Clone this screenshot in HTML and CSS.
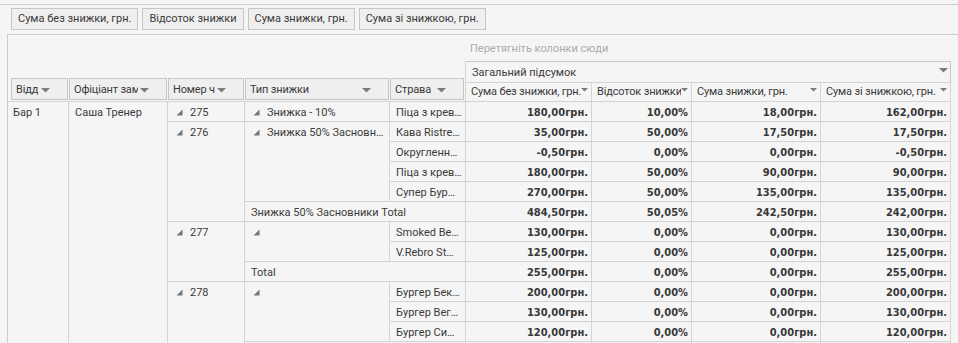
FILE: index.html
```html
<!DOCTYPE html>
<html lang="uk">
<head>
  <meta charset="UTF-8" />
  <meta name="viewport" content="width=device-width, initial-scale=1.0" />
  <title>Знижки по чеках</title>
  <link rel="stylesheet" href="styles.css">
</head>
<body>
  <!-- Поля даних зведеної таблиці -->
  <div class="data-fields">
    <span class="field-btn">Сума без знижки, грн.</span>
    <span class="field-btn">Відсоток знижки</span>
    <span class="field-btn">Сума знижки, грн.</span>
    <span class="field-btn">Сума зі знижкою, грн.</span>
  </div>

  <div class="pivot">
    <table class="grid">
      <colgroup>
        <col class="c-dept">
        <col class="c-waiter">
        <col class="c-check">
        <col class="c-type">
        <col class="c-dish">
        <col class="c-sum">
        <col class="c-pct">
        <col class="c-disc">
        <col class="c-total">
      </colgroup>

      <tr class="drop-row">
        <td colspan="5"></td>
        <td colspan="4" class="drop-hint">Перетягніть колонки сюди</td>
      </tr>

      <tr class="head-row">
        <td rowspan="2" class="rf rf-first">
          <div class="fbox"><span class="ft">Відд</span><svg class="drop" viewBox="0 0 9 5"><path d="M0 0h9L4.5 4.5z"/></svg></div>
        </td>
        <td rowspan="2" class="rf">
          <div class="fbox"><span class="ft">Офіціант замовлення</span><svg class="drop" viewBox="0 0 9 5"><path d="M0 0h9L4.5 4.5z"/></svg></div>
        </td>
        <td rowspan="2" class="rf">
          <div class="fbox"><span class="ft">Номер ч</span><svg class="drop" viewBox="0 0 9 5"><path d="M0 0h9L4.5 4.5z"/></svg></div>
        </td>
        <td rowspan="2" class="rf">
          <div class="fbox"><span class="ft">Тип знижки</span><svg class="drop" viewBox="0 0 9 5"><path d="M0 0h9L4.5 4.5z"/></svg></div>
        </td>
        <td rowspan="2" class="rf rf-last">
          <div class="fbox"><span class="ft">Страва</span><svg class="drop" viewBox="0 0 9 5"><path d="M0 0h9L4.5 4.5z"/></svg></div>
        </td>
        <td colspan="4" class="grand-head">
          <div class="in"><span class="ft">Загальний підсумок</span><svg class="drop" viewBox="0 0 9 5"><path d="M0 0h9L4.5 4.5z"/></svg></div>
        </td>
      </tr>

      <tr class="dh-row">
        <td class="dh"><div class="in"><span class="ft">Сума без знижки, грн.</span><svg class="drop-sm" viewBox="0 0 7 4"><path d="M0 0h7L3.5 3.5z"/></svg></div></td>
        <td class="dh"><div class="in"><span class="ft">Відсоток знижки</span><svg class="drop-sm" viewBox="0 0 7 4"><path d="M0 0h7L3.5 3.5z"/></svg></div></td>
        <td class="dh"><div class="in"><span class="ft">Сума знижки, грн.</span><svg class="drop-sm" viewBox="0 0 7 4"><path d="M0 0h7L3.5 3.5z"/></svg></div></td>
        <td class="dh"><div class="in"><span class="ft">Сума зі знижкою, грн.</span><svg class="drop-sm" viewBox="0 0 7 4"><path d="M0 0h7L3.5 3.5z"/></svg></div></td>
      </tr>

      <!-- чек 275 -->
      <tr class="r">
        <td rowspan="13" class="rh rh-dept">Бар 1</td>
        <td rowspan="13" class="rh">Саша Тренер</td>
        <td class="rh grp"><svg class="exp" viewBox="0 0 7 7"><path d="M6.5 0.5v6h-6z"/></svg>275</td>
        <td class="rh grp"><svg class="exp" viewBox="0 0 7 7"><path d="M6.5 0.5v6h-6z"/></svg>Знижка - 10%</td>
        <td class="rh">Піца з крев…</td>
        <td class="num">180,00грн.</td>
        <td class="num">10,00%</td>
        <td class="num">18,00грн.</td>
        <td class="num">162,00грн.</td>
      </tr>

      <!-- чек 276 -->
      <tr class="r">
        <td rowspan="5" class="rh grp"><svg class="exp" viewBox="0 0 7 7"><path d="M6.5 0.5v6h-6z"/></svg>276</td>
        <td rowspan="4" class="rh grp"><svg class="exp" viewBox="0 0 7 7"><path d="M6.5 0.5v6h-6z"/></svg>Знижка 50% Засновн…</td>
        <td class="rh">Кава Ristre…</td>
        <td class="num">35,00грн.</td>
        <td class="num">50,00%</td>
        <td class="num">17,50грн.</td>
        <td class="num">17,50грн.</td>
      </tr>
      <tr class="r">
        <td class="rh">Округленн…</td>
        <td class="num">-0,50грн.</td>
        <td class="num">0,00%</td>
        <td class="num">0,00грн.</td>
        <td class="num">-0,50грн.</td>
      </tr>
      <tr class="r">
        <td class="rh">Піца з крев…</td>
        <td class="num">180,00грн.</td>
        <td class="num">50,00%</td>
        <td class="num">90,00грн.</td>
        <td class="num">90,00грн.</td>
      </tr>
      <tr class="r">
        <td class="rh">Супер Бур…</td>
        <td class="num">270,00грн.</td>
        <td class="num">50,00%</td>
        <td class="num">135,00грн.</td>
        <td class="num">135,00грн.</td>
      </tr>
      <tr class="r">
        <td colspan="2" class="rh rh-total">Знижка 50% Засновники Total</td>
        <td class="num">484,50грн.</td>
        <td class="num">50,05%</td>
        <td class="num">242,50грн.</td>
        <td class="num">242,00грн.</td>
      </tr>

      <!-- чек 277 -->
      <tr class="r">
        <td rowspan="3" class="rh grp"><svg class="exp" viewBox="0 0 7 7"><path d="M6.5 0.5v6h-6z"/></svg>277</td>
        <td rowspan="2" class="rh grp"><svg class="exp" viewBox="0 0 7 7"><path d="M6.5 0.5v6h-6z"/></svg></td>
        <td class="rh">Smoked Be…</td>
        <td class="num">130,00грн.</td>
        <td class="num">0,00%</td>
        <td class="num">0,00грн.</td>
        <td class="num">130,00грн.</td>
      </tr>
      <tr class="r">
        <td class="rh">V.Rebro St…</td>
        <td class="num">125,00грн.</td>
        <td class="num">0,00%</td>
        <td class="num">0,00грн.</td>
        <td class="num">125,00грн.</td>
      </tr>
      <tr class="r">
        <td colspan="2" class="rh rh-total">Total</td>
        <td class="num">255,00грн.</td>
        <td class="num">0,00%</td>
        <td class="num">0,00грн.</td>
        <td class="num">255,00грн.</td>
      </tr>

      <!-- чек 278 -->
      <tr class="r">
        <td rowspan="4" class="rh grp"><svg class="exp" viewBox="0 0 7 7"><path d="M6.5 0.5v6h-6z"/></svg>278</td>
        <td rowspan="3" class="rh grp"><svg class="exp" viewBox="0 0 7 7"><path d="M6.5 0.5v6h-6z"/></svg></td>
        <td class="rh">Бургер Бек…</td>
        <td class="num">200,00грн.</td>
        <td class="num">0,00%</td>
        <td class="num">0,00грн.</td>
        <td class="num">200,00грн.</td>
      </tr>
      <tr class="r">
        <td class="rh">Бургер Вег…</td>
        <td class="num">130,00грн.</td>
        <td class="num">0,00%</td>
        <td class="num">0,00грн.</td>
        <td class="num">130,00грн.</td>
      </tr>
      <tr class="r">
        <td class="rh">Бургер Си…</td>
        <td class="num">120,00грн.</td>
        <td class="num">0,00%</td>
        <td class="num">0,00грн.</td>
        <td class="num">120,00грн.</td>
      </tr>
      <tr class="r">
        <td colspan="2" class="rh rh-total">Total</td>
        <td class="num">450,00грн.</td>
        <td class="num">0,00%</td>
        <td class="num">0,00грн.</td>
        <td class="num">450,00грн.</td>
      </tr>
    </table>
  </div>
</body>
</html>
```

FILE: styles.css
```css
body {
  margin: 0;
  background-color: #f5f5f5;
  font-family: Roboto, "Liberation Sans", Arial, sans-serif;
  font-size: 11px;
  color: #3a3a3a;
  overflow: hidden;
}

/* кнопки полів даних */
.data-fields {
  display: flex;
  gap: 4px;
  margin-top: 4px;
  padding: 3px 11px 4px;
  border-top: 1px solid #cdcdcd;
}
.field-btn {
  height: 22px;
  box-sizing: border-box;
  padding: 0 6px;
  line-height: 20px;
  border: 1px solid #c6c6c6;
  background-color: #efefef;
  white-space: nowrap;
}

.pivot {
  margin-left: 7px;
  border-top: 1px solid #cdcdcd;
  border-left: 1px solid #cdcdcd;
}
.grid {
  border-collapse: separate;
  border-spacing: 0;
  table-layout: fixed;
  width: 943px;
}
.grid td {
  padding: 0;
  white-space: nowrap;
  overflow: hidden;
}
.c-dept { width: 61px; }
.c-waiter { width: 99px; }
.c-check { width: 77px; }
.c-type { width: 145px; }
.c-dish { width: 76px; }
.c-sum { width: 126px; }
.c-pct { width: 100px; }
.c-disc { width: 129px; }
.c-total { width: 130px; }

.drop-row { height: 26px; }
.drop-hint {
  color: #ababab;
  padding-left: 4px !important;
  vertical-align: middle;
}

/* заголовки полів рядків */
.rf {
  vertical-align: bottom;
  padding: 0 1px 1px 0 !important;
  border-bottom: 1px solid #d4d4d4;
}
.rf-first { padding-left: 3px !important; }
.rf-last { border-right: 1px solid #d4d4d4; }
.fbox {
  display: flex;
  align-items: center;
  height: 22px;
  box-sizing: border-box;
  border: 1px solid #c6c6c6;
  background-color: #efefef;
  padding: 2px 17px 0 4px;
  line-height: 18px;
}
.fbox .ft {
  flex: 1;
  overflow: hidden;
  white-space: nowrap;
  margin-right: 2px;
  letter-spacing: -0.15px;
}
.drop {
  width: 9px;
  height: 5px;
  fill: #7b7b7b;
  flex-shrink: 0;
}

/* заголовки колонок */
.head-row { height: 22px; }
.grand-head {
  border-top: 1px solid #c9c9c9;
  border-right: 1px solid #c9c9c9;
  border-bottom: 1px solid #d4d4d4;
  vertical-align: top;
}
.grand-head .in {
  display: flex;
  height: 20px;
  box-sizing: border-box;
  padding: 1px 2px 0 6px;
  line-height: 19px;
}
.grand-head .ft { flex: 1; }
.grand-head .drop { margin-top: 5px; }

.dh-row { height: 19px; }
.dh {
  border-right: 1px solid #d4d4d4;
  border-bottom: 1px solid #d4d4d4;
  vertical-align: top;
}
.dh .in {
  display: flex;
  height: 18px;
  line-height: 18px;
  padding: 0 3px 0 5px;
}
.dh .ft {
  flex: 1;
  overflow: hidden;
  white-space: nowrap;
  letter-spacing: -0.15px;
}
.drop-sm {
  width: 7px;
  height: 4px;
  margin-top: 5px;
  fill: #7b7b7b;
  flex-shrink: 0;
}

/* рядки даних */
.r { height: 20px; }
.r td {
  border-right: 1px solid #d4d4d4;
  border-bottom: 1px solid #d4d4d4;
  vertical-align: top;
  padding-top: 2px;
  line-height: 17px;
}
.rh { padding-left: 6px !important; }
.rh-dept { padding-left: 5px !important; }
.grp { padding-left: 8px !important; }
.exp {
  width: 7px;
  height: 7px;
  margin-right: 7px;
  fill: #767676;
}
.num {
  text-align: right;
  padding-right: 3px !important;
  font-family: "DejaVu Sans Condensed", "DejaVu Sans", sans-serif;
  font-weight: bold;
  font-size: 11px;
  color: #383838;
}
```
